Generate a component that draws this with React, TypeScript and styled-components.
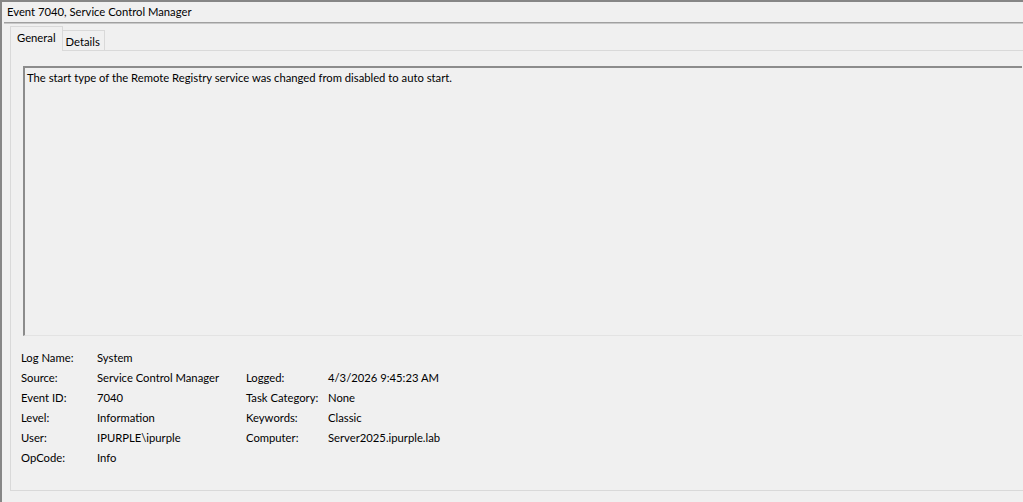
import React from "react";
import styled, { createGlobalStyle } from "styled-components";

const Global = createGlobalStyle`
  html, body { margin: 0; padding: 0; background: #f0f0f0; }
  body { font-family: Lato, "Segoe UI", sans-serif; font-size: 11.25px; color: #000; }
`;

const Window = styled.div`
  width: 1023px;
  height: 502px;
  box-sizing: border-box;
  background: #f0f0f0;
  border-left: 2px solid #868686;
  border-top: 2px solid #868686;
  overflow: hidden;
  display: flex;
  flex-direction: column;
`;

const TitleBar = styled.div`
  height: 20px;
  line-height: 20px;
  padding-left: 3px;
  margin-left: 2px;
  border-bottom: 1px solid #a0a0a0;
  box-shadow: 0 1px 0 #c8c8c8;
`;

const Body = styled.div`
  flex: 1;
  display: flex;
  flex-direction: column;
  padding: 3px 0 11px 8px;
`;

const TabStrip = styled.div`
  display: flex;
  align-items: flex-end;
  height: 24px;
`;

const Tab = styled.div<{ $active?: boolean }>`
  box-sizing: border-box;
  height: ${(p) => (p.$active ? "25px" : "20px")};
  line-height: ${(p) => (p.$active ? "22px" : "21px")};
  padding: 0 ${(p) => (p.$active ? "6px" : "4px")};
  margin-left: ${(p) => (p.$active ? "0" : "-2px")};
  border: 1px solid #d9d9d9;
  border-bottom: none;
  background: #f0f0f0;
  margin-bottom: ${(p) => (p.$active ? "-1px" : "0")};
  position: relative;
  z-index: ${(p) => (p.$active ? 1 : 0)};
`;

const Panel = styled.div`
  flex: 1;
  box-sizing: border-box;
  width: calc(100% + 12px);
  border: 1px solid #d9d9d9;
  padding: 15px 12px 0 12px;
  display: flex;
  flex-direction: column;
`;

const MessageBox = styled.div`
  height: 270px;
  box-sizing: border-box;
  border-left: 2px solid #8c8c8c;
  border-top: 2px solid #8c8c8c;
  border-bottom: 1px solid #e3e3e3;
  padding: 2px 2px;
  line-height: 16px;
`;

const InfoGrid = styled.div`
  display: grid;
  grid-template-columns: 76px 149px 82px 1fr;
  grid-auto-rows: 20px;
  align-items: center;
  margin-top: 11px;
  margin-left: -2px;
`;

const Cell = styled.div`
  white-space: nowrap;
`;

const rows: [string, string, string, string][] = [
  ["Log Name:", "System", "", ""],
  ["Source:", "Service Control Manager", "Logged:", "4/3/2026 9:45:23 AM"],
  ["Event ID:", "7040", "Task Category:", "None"],
  ["Level:", "Information", "Keywords:", "Classic"],
  ["User:", "IPURPLE\\ipurple", "Computer:", "Server2025.ipurple.lab"],
  ["OpCode:", "Info", "", ""],
];

export default function App() {
  return (
    <>
      <Global />
      <Window>
        <TitleBar>Event 7040, Service Control Manager</TitleBar>
        <Body>
          <TabStrip>
            <Tab $active>General</Tab>
            <Tab>Details</Tab>
          </TabStrip>
          <Panel>
            <MessageBox>
              The start type of the Remote Registry service was changed from disabled to auto start.
            </MessageBox>
            <InfoGrid>
              {rows.map((r, i) => (
                <React.Fragment key={i}>
                  <Cell>{r[0]}</Cell>
                  <Cell>{r[1]}</Cell>
                  <Cell>{r[2]}</Cell>
                  <Cell>{r[3]}</Cell>
                </React.Fragment>
              ))}
            </InfoGrid>
          </Panel>
        </Body>
      </Window>
    </>
  );
}
